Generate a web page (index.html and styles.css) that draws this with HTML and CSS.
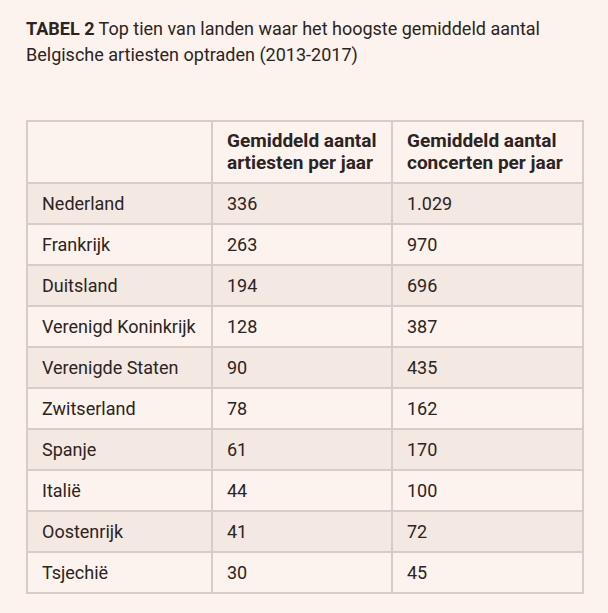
FILE: index.html
```html
<!DOCTYPE html>
<html lang="nl">
<head>
<meta charset="utf-8">
<title>Tabel 2</title>
<link rel="stylesheet" href="styles.css">
</head>
<body>
<div class="page">
  <p class="caption"><strong>TABEL 2</strong> Top tien van landen waar het hoogste gemiddeld aantal Belgische artiesten optraden (2013-2017)</p>
  <table class="data">
    <colgroup>
      <col class="c1"><col class="c2"><col class="c3">
    </colgroup>
    <thead>
      <tr><th></th><th>Gemiddeld aantal artiesten per jaar</th><th>Gemiddeld aantal concerten per jaar</th></tr>
    </thead>
    <tbody>
      <tr class="alt"><td>Nederland</td><td>336</td><td>1.029</td></tr>
      <tr><td>Frankrijk</td><td>263</td><td>970</td></tr>
      <tr class="alt"><td>Duitsland</td><td>194</td><td>696</td></tr>
      <tr><td>Verenigd Koninkrijk</td><td>128</td><td>387</td></tr>
      <tr class="alt"><td>Verenigde Staten</td><td>90</td><td>435</td></tr>
      <tr><td>Zwitserland</td><td>78</td><td>162</td></tr>
      <tr class="alt"><td>Spanje</td><td>61</td><td>170</td></tr>
      <tr><td>Italië</td><td>44</td><td>100</td></tr>
      <tr class="alt"><td>Oostenrijk</td><td>41</td><td>72</td></tr>
      <tr><td>Tsjechië</td><td>30</td><td>45</td></tr>
    </tbody>
  </table>
</div>
</body>
</html>
```
FILE: styles.css
```css
html, body {
  margin: 0;
  padding: 0;
  background: #fdf3ee;
}
.page {
  padding: 16px 26px 0 26px;
  font-family: Roboto, "Liberation Sans", sans-serif;
  color: #2b2422;
}
.caption {
  margin: 0;
  width: 556px;
  font-size: 18px;
  line-height: 26px;
}
.caption strong {
  font-weight: 700;
}
.data {
  margin-top: 52px;
  border-collapse: collapse;
  width: 556px;
  table-layout: fixed;
  font-size: 18px;
}
.c1 { width: 185px; }
.c2 { width: 180px; }
.c3 { width: 191px; }
.data th, .data td {
  border: 2px solid #d7ccc7;
  text-align: left;
  vertical-align: middle;
  padding: 0 13px 0 14px;
}
.data th {
  height: 60px;
  font-size: 19px;
  font-weight: 700;
  line-height: 22px;
}
.data td {
  height: 39px;
  line-height: 20px;
}
.data tr.alt td {
  background: #f4e8e3;
}
```
